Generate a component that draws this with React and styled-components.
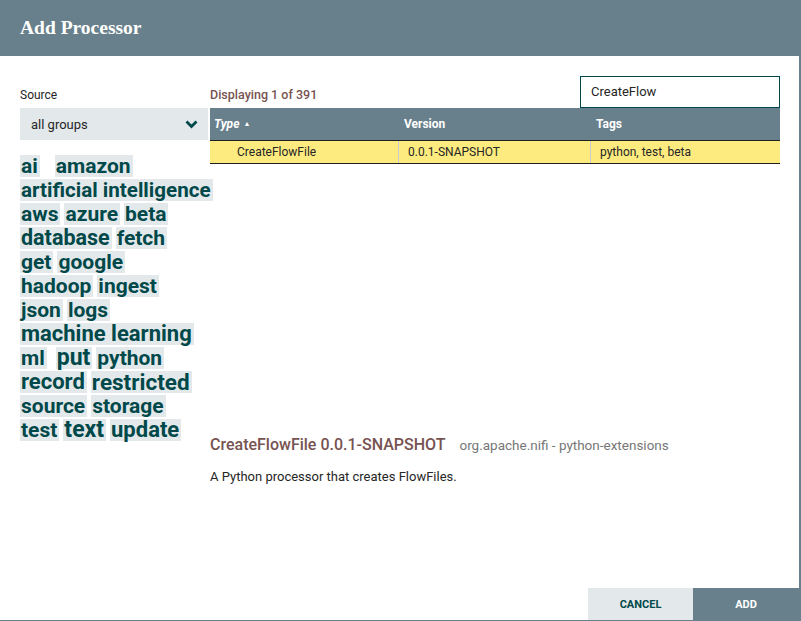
import React from "react";
import styled, { createGlobalStyle } from "styled-components";

const GlobalStyle = createGlobalStyle`
  html, body {
    margin: 0;
    padding: 0;
    background: #ffffff;
    overflow: hidden;
  }
  body {
    font-family: Roboto, "Liberation Sans", sans-serif;
    color: #262626;
  }
`;

const SLATE = "#68808b";
const TEAL = "#004849";
const MIST = "#e3e8eb";
const BROWN = "#775351";

// tag cloud rows: [label, font size, gap after]
const tagRows = [
  [["ai", 21, 15], ["amazon", 21]],
  [["artificial intelligence", 20.6]],
  [["aws", 21], ["azure", 21], ["beta", 21]],
  [["database", 21.5], ["fetch", 21]],
  [["get", 21], ["google", 21]],
  [["hadoop", 21], ["ingest", 21]],
  [["json", 21], ["logs", 21]],
  [["machine learning", 22]],
  [["ml", 21, 9], ["put", 23], ["python", 21]],
  [["record", 22], ["restricted", 22.5]],
  [["source", 21], ["storage", 21]],
  [["test", 21], ["text", 23], ["update", 22]],
];

const Dialog = styled.div`
  width: 801px;
  height: 621px;
  box-sizing: border-box;
  border-right: 2px solid ${SLATE};
  border-bottom: 1px solid ${SLATE};
  display: flex;
  flex-direction: column;
`;

const Header = styled.div`
  height: 56px;
  flex: none;
  background: ${SLATE};
  display: flex;
  align-items: center;
  padding-left: 20px;
  color: #fff;
  font-family: "Liberation Serif", serif;
  font-weight: bold;
  font-size: 19.5px;
`;

const Body = styled.div`
  flex: 1;
  display: flex;
  gap: 2px;
  padding: 20px 19px 0 20px;
`;

const Side = styled.div`
  width: 188px;
  flex: none;
  padding-top: 12px;
`;

const Label = styled.div`
  font-size: 12px;
  line-height: 14px;
  margin-bottom: 6px;
  color: #262626;
`;

const Select = styled.div`
  height: 32px;
  background: ${MIST};
  display: flex;
  align-items: center;
  justify-content: space-between;
  padding: 0 10px 0 11px;
  font-size: 13px;
  color: #262626;
`;

const Cloud = styled.div`
  margin-top: 15px;
  display: flex;
  flex-direction: column;
  gap: 2px;
`;

const TagRow = styled.div`
  display: flex;
  align-items: flex-end;
`;

const Tag = styled.span`
  background: ${MIST};
  color: ${TEAL};
  font-weight: bold;
  font-size: ${(p) => p.$size}px;
  line-height: 22px;
  height: 22px;
  padding: 0 2px 0 1px;
  margin-right: ${(p) => p.$gap}px;
  white-space: nowrap;
`;

const Main = styled.div`
  flex: 1;
  display: flex;
  flex-direction: column;
`;

const TopBar = styled.div`
  height: 32px;
  display: flex;
  justify-content: space-between;
  align-items: flex-end;
`;

const Count = styled.div`
  font-size: 12.5px;
  font-weight: 500;
  color: ${BROWN};
  line-height: 14px;
  padding-bottom: 6px;
`;

const Search = styled.div`
  width: 200px;
  height: 32px;
  box-sizing: border-box;
  border: 1px solid ${TEAL};
  font-size: 13px;
  line-height: 30px;
  padding-left: 10px;
  color: #262626;
`;

const TableArea = styled.div`
  height: 328px;
`;

const Row = styled.div`
  display: grid;
  grid-template-columns: 188px 192px 1fr;
`;

const HeadCell = styled.div`
  height: 32px;
  background: ${SLATE};
  color: #fff;
  font-size: 12px;
  font-weight: bold;
  font-style: ${(p) => (p.$sorted ? "italic" : "normal")};
  display: flex;
  align-items: center;
  gap: 4px;
  padding-left: ${(p) => (p.$sorted ? 4 : 6)}px;
`;

const SortArrow = styled.span`
  font-size: 7px;
  font-style: normal;
`;

const DataRow = styled(Row)`
  background: #fdeb7f;
  border-top: 1px solid #1f1f1f;
  border-bottom: 1px solid #1f1f1f;
`;

const Cell = styled.div`
  height: 22px;
  font-size: 12px;
  line-height: 22px;
  padding-left: ${(p) => p.$indent || 9}px;
  border-left: ${(p) => (p.$first ? "none" : "1px solid #c8cdd0")};
  color: #262626;
`;

const Details = styled.div`
  display: flex;
  align-items: baseline;
  gap: 14px;
`;

const DetailTitle = styled.div`
  font-size: 16px;
  line-height: 18px;
  font-weight: 500;
  color: ${BROWN};
`;

const DetailMeta = styled.div`
  font-size: 13.5px;
  color: #777;
`;

const Description = styled.div`
  margin-top: 15px;
  font-size: 13px;
  line-height: 15px;
  color: #262626;
`;

const Footer = styled.div`
  display: flex;
  justify-content: flex-end;
  flex: none;
`;

const Button = styled.div`
  width: ${(p) => p.$w}px;
  height: 32px;
  display: flex;
  align-items: center;
  justify-content: center;
  font-size: 11px;
  font-weight: bold;
  background: ${(p) => (p.$primary ? SLATE : MIST)};
  color: ${(p) => (p.$primary ? "#fff" : TEAL)};
`;

const Chevron = () => (
  <svg width="13" height="9" viewBox="0 0 13 9">
    <path d="M1.5 1.5 L6.5 6.5 L11.5 1.5" fill="none" stroke={TEAL} strokeWidth="2.8" />
  </svg>
);

export default function App() {
  return (
    <>
      <GlobalStyle />
      <Dialog>
        <Header>Add Processor</Header>
        <Body>
          <Side>
            <Label>Source</Label>
            <Select>
              all groups
              <Chevron />
            </Select>
            <Cloud>
              {tagRows.map((row, i) => (
                <TagRow key={i}>
                  {row.map(([t, size, gap]) => (
                    <Tag key={t} $size={size} $gap={gap || 4}>
                      {t}
                    </Tag>
                  ))}
                </TagRow>
              ))}
            </Cloud>
          </Side>
          <Main>
            <TopBar>
              <Count>Displaying 1 of 391</Count>
              <Search>CreateFlow</Search>
            </TopBar>
            <TableArea>
              <Row>
                <HeadCell $sorted>
                  Type <SortArrow>▲</SortArrow>
                </HeadCell>
                <HeadCell>Version</HeadCell>
                <HeadCell>Tags</HeadCell>
              </Row>
              <DataRow>
                <Cell $first $indent={27}>CreateFlowFile</Cell>
                <Cell>0.0.1-SNAPSHOT</Cell>
                <Cell>python, test, beta</Cell>
              </DataRow>
            </TableArea>
            <Details>
              <DetailTitle>CreateFlowFile 0.0.1-SNAPSHOT</DetailTitle>
              <DetailMeta>org.apache.nifi - python-extensions</DetailMeta>
            </Details>
            <Description>A Python processor that creates FlowFiles.</Description>
          </Main>
        </Body>
        <Footer>
          <Button $w={105}>CANCEL</Button>
          <Button $w={106} $primary>ADD</Button>
        </Footer>
      </Dialog>
    </>
  );
}
